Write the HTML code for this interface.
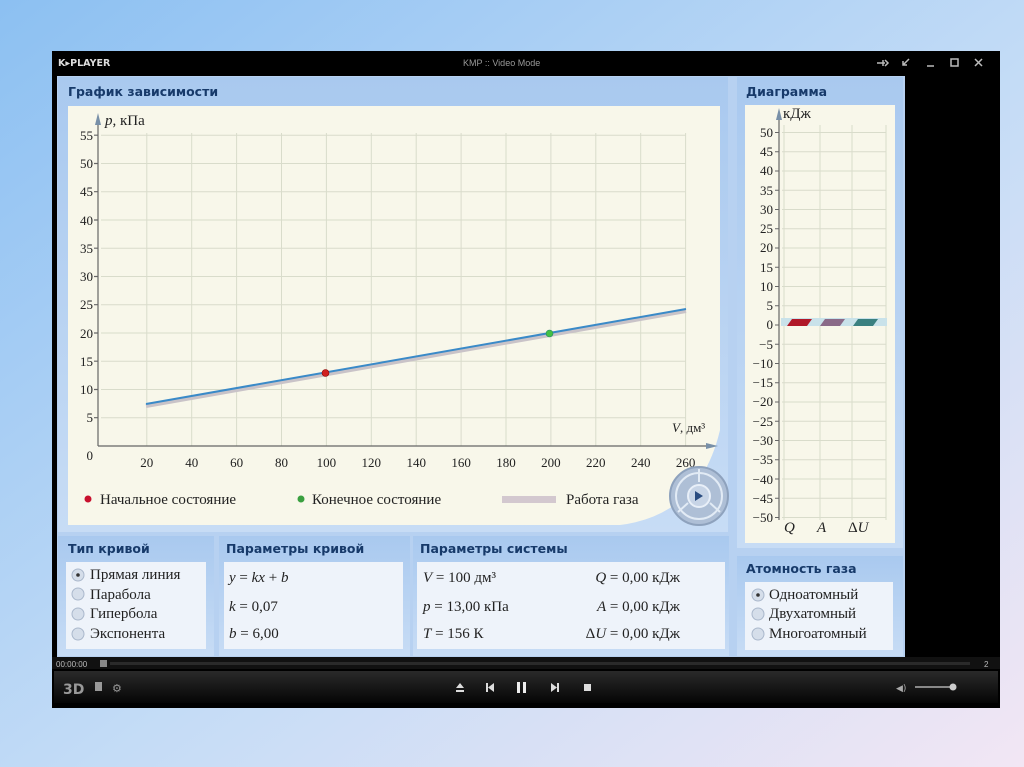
<!DOCTYPE html>
<html><head><meta charset="utf-8"><style>
html,body{margin:0;padding:0;width:1024px;height:767px;overflow:hidden}
svg{display:block}
.h{font-family:"DejaVu Sans","Liberation Sans",sans-serif;font-weight:bold;font-size:12.5px;fill:#173a6a}
.s{font-family:"Liberation Serif",serif;font-size:13px;fill:#222}
.l{font-family:"Liberation Serif",serif;font-size:15px;fill:#222}
.i{font-style:italic}
</style></head><body>
<svg width="1024" height="767" viewBox="0 0 1024 767" xmlns="http://www.w3.org/2000/svg">
<defs>
<linearGradient id="bg" x1="0" y1="0" x2="1" y2="1"><stop offset="0" stop-color="#8cc0f2"/><stop offset="0.55" stop-color="#c4dcf6"/><stop offset="1" stop-color="#f2e6f4"/></linearGradient>
<linearGradient id="hd" x1="0" y1="0" x2="0" y2="1"><stop offset="0" stop-color="#a9c9ef"/><stop offset="1" stop-color="#c7dcf5"/></linearGradient>
<linearGradient id="bar" x1="0" y1="0" x2="0" y2="1"><stop offset="0" stop-color="#2a2a2a"/><stop offset="1" stop-color="#050505"/></linearGradient>
</defs>
<rect width="1024" height="767" fill="url(#bg)"/>
<rect x="52" y="51" width="948" height="657" fill="#000"/>
<text x="58" y="66" font-family="DejaVu Sans,sans-serif" font-weight="bold" font-size="9.5" fill="#ddd">K▸PLAYER</text>
<text x="463" y="66" font-family="Liberation Sans,sans-serif" font-size="9" fill="#999">KMP :: Video Mode</text>
<g stroke="#bbb" stroke-width="1.5" fill="none">
<path d="M877 63h8M883 60v6M885 60l3 3-3 3"/>
<path d="M909 59l-6 6M903 61v4h4"/>
<path d="M927 66h7"/>
<rect x="951" y="59" width="7" height="7"/>
<path d="M975 59l7 7M982 59l-7 7"/>
</g>
<rect x="57" y="76" width="848" height="581" fill="#b7d1f1"/>
<rect x="58" y="77" width="670" height="455" fill="url(#hd)"/>
<text x="68" y="96" class="h">График зависимости</text>
<path d="M68 106 H720 V430 Q700 515 620 525 H68 Z" fill="#f8f7ea"/>
<g stroke="#d9dccb" stroke-width="1">
<path d="M146.8 133V446M191.7 133V446M236.6 133V446M281.5 133V446M326.4 133V446M371.3 133V446M416.2 133V446M461.1 133V446M506 133V446M550.9 133V446M595.8 133V446M640.7 133V446M685.6 133V446"/>
<path d="M101 417.7H686M101 389.5H686M101 361.2H686M101 333H686M101 304.7H686M101 276.5H686M101 248.2H686M101 220H686M101 191.7H686M101 163.5H686M101 135.2H686"/>
</g>
<g stroke="#666" stroke-width="1.2">
<path d="M98 446V120M98 446H712"/>
<path d="M94 417.7h4M94 389.5h4M94 361.2h4M94 333h4M94 304.7h4M94 276.5h4M94 248.2h4M94 220h4M94 191.7h4M94 163.5h4M94 135.2h4"/>
</g>
<path d="M98 113 l-3 12 h6z" fill="#7890a8"/>
<path d="M718 446 l-12 -3 v6z" fill="#7890a8"/>
<g class="s" text-anchor="end">
<text x="93" y="422">5</text><text x="93" y="394">10</text><text x="93" y="366">15</text><text x="93" y="338">20</text><text x="93" y="309">25</text><text x="93" y="281">30</text><text x="93" y="253">35</text><text x="93" y="225">40</text><text x="93" y="196">45</text><text x="93" y="168">50</text><text x="93" y="140">55</text><text x="93" y="460">0</text>
</g>
<g class="s" text-anchor="middle">
<text x="146.8" y="467">20</text><text x="191.7" y="467">40</text><text x="236.6" y="467">60</text><text x="281.5" y="467">80</text><text x="326.4" y="467">100</text><text x="371.3" y="467">120</text><text x="416.2" y="467">140</text><text x="461.1" y="467">160</text><text x="506" y="467">180</text><text x="550.9" y="467">200</text><text x="595.8" y="467">220</text><text x="640.7" y="467">240</text><text x="685.6" y="467">260</text>
</g>
<text x="105" y="125" class="l"><tspan class="i">p</tspan>, кПа</text>
<text x="672" y="432" class="s" font-size="14"><tspan class="i">V</tspan>, дм³</text>
<path d="M146 406 L686 311" stroke="#c9c3c8" stroke-width="4"/>
<path d="M146 404 L686 309" stroke="#3a8ac8" stroke-width="2"/>
<circle cx="325.5" cy="373" r="3.5" fill="#d02020" stroke="#800" stroke-width="0.6"/>
<circle cx="549.5" cy="333.5" r="3.5" fill="#44c044" stroke="#286" stroke-width="0.6"/>
<circle cx="88" cy="499" r="3.5" fill="#c8102e"/>
<text x="100" y="504" class="l">Начальное состояние</text>
<circle cx="301" cy="499" r="3.5" fill="#3aa040"/>
<text x="312" y="504" class="l">Конечное состояние</text>
<rect x="502" y="496" width="54" height="7" fill="#d3c8cf"/>
<text x="566" y="504" class="l">Работа газа</text>
<circle cx="699" cy="496" r="29" fill="#aebfd6" stroke="#8ea2bd" stroke-width="2"/>
<circle cx="699" cy="496" r="23" fill="none" stroke="#e2ebf5" stroke-width="2"/>
<path d="M699 469v13M688 503l-10 9M710 503l10 9" stroke="#e2ebf5" stroke-width="2"/>
<circle cx="699" cy="496" r="11" fill="#c7d4e6" stroke="#e8eff8" stroke-width="2"/>
<path d="M695 491l8 5-8 5z" fill="#2a4c80"/>
<rect x="58" y="536" width="156" height="120" fill="url(#hd)"/>
<text x="68" y="553" class="h">Тип кривой</text>
<rect x="66" y="562" width="140" height="87" fill="#eef3fa"/>
<rect x="219" y="536" width="191" height="120" fill="url(#hd)"/>
<text x="226" y="553" class="h">Параметры кривой</text>
<rect x="224" y="562" width="179" height="87" fill="#eef3fa"/>
<rect x="413" y="536" width="316" height="120" fill="url(#hd)"/>
<text x="420" y="553" class="h">Параметры системы</text>
<rect x="417" y="562" width="308" height="87" fill="#eef3fa"/>
<g>
<circle cx="78" cy="575" r="6" fill="#d5deea" stroke="#aab8cc"/><circle cx="78" cy="575" r="1.8" fill="#333"/>
<circle cx="78" cy="594" r="6" fill="#d5deea" stroke="#aab8cc"/>
<circle cx="78" cy="614" r="6" fill="#d5deea" stroke="#aab8cc"/>
<circle cx="78" cy="634" r="6" fill="#d5deea" stroke="#aab8cc"/>
</g>
<text x="90" y="579" class="l">Прямая линия</text>
<text x="90" y="599" class="l">Парабола</text>
<text x="90" y="618" class="l">Гипербола</text>
<text x="90" y="638" class="l">Экспонента</text>
<text x="229" y="582" class="l"><tspan class="i">y</tspan> = <tspan class="i">kx</tspan> + <tspan class="i">b</tspan></text>
<text x="229" y="611" class="l"><tspan class="i">k</tspan> = 0,07</text>
<text x="229" y="638" class="l"><tspan class="i">b</tspan> = 6,00</text>
<text x="423" y="582" class="l"><tspan class="i">V</tspan> = 100 дм³</text>
<text x="423" y="611" class="l"><tspan class="i">p</tspan> = 13,00 кПа</text>
<text x="423" y="638" class="l"><tspan class="i">T</tspan> = 156 К</text>
<g text-anchor="end">
<text x="680" y="582" class="l"><tspan class="i">Q</tspan> = 0,00 кДж</text>
<text x="680" y="611" class="l"><tspan class="i">A</tspan> = 0,00 кДж</text>
<text x="680" y="638" class="l">Δ<tspan class="i">U</tspan> = 0,00 кДж</text>
</g>
<rect x="737" y="77" width="166" height="471" fill="url(#hd)"/>
<text x="746" y="96" class="h">Диаграмма</text>
<rect x="745" y="105" width="150" height="438" fill="#f8f7ea"/>
<g stroke="#d9dccb">
<path d="M784 125V520M820 125V520M852 125V520M886 125V520"/>
<path d="M782 132.5H886M782 151.7H886M782 171H886M782 190.2H886M782 209.5H886M782 228.7H886M782 248H886M782 267.2H886M782 286.5H886M782 305.7H886M782 344.2H886M782 363.5H886M782 382.7H886M782 402H886M782 421.2H886M782 440.5H886M782 459.7H886M782 479H886M782 498.2H886M782 517.5H886"/>
</g>
<path d="M779 520V115" stroke="#666" stroke-width="1.2"/>
<path d="M779 108l-3 12h6z" fill="#7890a8"/>
<g stroke="#666"><path d="M775 132.5h4M775 151.7h4M775 171h4M775 190.2h4M775 209.5h4M775 228.7h4M775 248h4M775 267.2h4M775 286.5h4M775 305.7h4M775 325h4M775 344.2h4M775 363.5h4M775 382.7h4M775 402h4M775 421.2h4M775 440.5h4M775 459.7h4M775 479h4M775 498.2h4M775 517.5h4"/></g>
<g class="s" text-anchor="end">
<text x="773" y="137">50</text><text x="773" y="156">45</text><text x="773" y="175">40</text><text x="773" y="195">35</text><text x="773" y="214">30</text><text x="773" y="233">25</text><text x="773" y="252">20</text><text x="773" y="272">15</text><text x="773" y="291">10</text><text x="773" y="310">5</text><text x="773" y="329">0</text><text x="773" y="349">−5</text><text x="773" y="368">−10</text><text x="773" y="387">−15</text><text x="773" y="406">−20</text><text x="773" y="426">−25</text><text x="773" y="445">−30</text><text x="773" y="464">−35</text><text x="773" y="484">−40</text><text x="773" y="503">−45</text><text x="773" y="522">−50</text>
</g>
<text x="783" y="118" class="l">кДж</text>
<rect x="781" y="318" width="106" height="8" fill="#c9e2ea"/>
<path d="M787 326l5-7h20l-5 7z" fill="#b01828"/>
<path d="M820 326l5-7h20l-5 7z" fill="#8a6a88"/>
<path d="M853 326l5-7h20l-5 7z" fill="#3a8080"/>
<text x="784" y="532" class="l i">Q</text>
<text x="817" y="532" class="l i">A</text>
<text x="848" y="532" class="l">Δ<tspan class="i">U</tspan></text>
<rect x="737" y="556" width="166" height="100" fill="url(#hd)"/>
<text x="746" y="573" class="h">Атомность газа</text>
<rect x="745" y="582" width="148" height="68" fill="#eef3fa"/>
<circle cx="758" cy="595" r="6" fill="#d5deea" stroke="#aab8cc"/><circle cx="758" cy="595" r="1.8" fill="#333"/>
<circle cx="758" cy="614" r="6" fill="#d5deea" stroke="#aab8cc"/>
<circle cx="758" cy="634" r="6" fill="#d5deea" stroke="#aab8cc"/>
<text x="769" y="599" class="l">Одноатомный</text>
<text x="769" y="618" class="l">Двухатомный</text>
<text x="769" y="638" class="l">Многоатомный</text>
<rect x="52" y="657" width="948" height="12" fill="#111"/>
<rect x="110" y="662" width="860" height="3" fill="#2a2a2a"/>
<text x="56" y="667" font-family="Liberation Sans,sans-serif" font-size="8" fill="#bbb">00:00:00</text>
<rect x="100" y="660" width="7" height="7" fill="#888"/>
<text x="984" y="667" font-family="Liberation Sans,sans-serif" font-size="8" fill="#bbb">2</text>
<rect x="54" y="671" width="944" height="32" fill="url(#bar)"/>
<text x="63" y="694" font-family="DejaVu Sans,sans-serif" font-weight="bold" font-size="14" fill="#999">3D</text>
<rect x="95" y="682" width="7" height="9" fill="#999"/>
<text x="112" y="692" font-family="DejaVu Sans,sans-serif" font-size="11" fill="#999">⚙</text>
<path d="M456 688l4-5 4 5zM456 690h8v2h-8z" fill="#ddd"/>
<path d="M486 683h2v9h-2zM494 683v9l-6-4.5z" fill="#ddd"/>
<path d="M517 682h3v11h-3zM523 682h3v11h-3z" fill="#eee"/>
<path d="M551 683v9l6-4.5zM557 683h2v9h-2z" fill="#ddd"/>
<rect x="584" y="684" width="7" height="7" fill="#ddd"/>
<text x="896" y="691" font-family="DejaVu Sans,sans-serif" font-size="9" fill="#aaa">◀)</text>
<rect x="915" y="686" width="40" height="2" fill="#888"/>
<circle cx="953" cy="687" r="3.5" fill="#ccc"/>
</svg>
</body></html>
